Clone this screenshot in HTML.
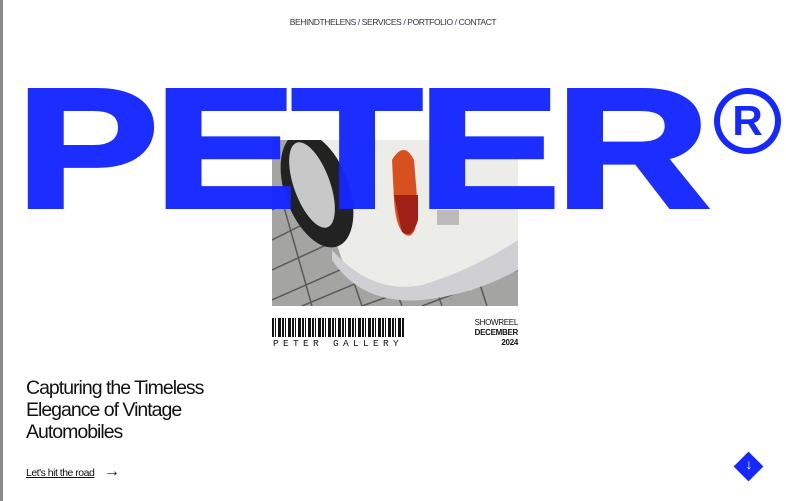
<!DOCTYPE html>
<html><head><meta charset="utf-8"><style>
*{margin:0;padding:0;box-sizing:border-box}
body{width:786px;height:501px;background:#fff;position:relative;overflow:hidden;font-family:"Liberation Sans",sans-serif;color:#111}
.bar{position:absolute;left:0;top:0;width:3px;height:501px;background:#8a8a8a}
.nav{position:absolute;top:17px;left:0;width:786px;text-align:center;font-size:8.5px;letter-spacing:-0.4px;color:#333}
.nav b{color:#1f33ff;font-weight:normal}
.photo{position:absolute;left:272px;top:140px;width:246px;height:166px;overflow:hidden;background:#9a9a98}
.big{position:absolute;left:16px;top:64px;font-size:170px;font-weight:bold;color:#1428ff;line-height:1;transform-origin:0 0;transform:scaleX(1.26);letter-spacing:-4px;-webkit-text-stroke:4px #1428ff;opacity:.97}
.reg{position:absolute;left:714px;top:88px;width:67px;height:66px;border:6px solid #1428ff;border-radius:50%;color:#1428ff;font-weight:bold;font-size:42px;text-align:center;line-height:54px;background:#fff}
.bc{position:absolute;left:272px;top:318px;width:133px;height:19px;background:repeating-linear-gradient(90deg,#111 0 2px,#fff 2px 3px,#111 3px 4px,#fff 4px 6px,#111 6px 9px,#fff 9px 10px)}
.pg{position:absolute;left:273px;top:338px;font-family:"Liberation Mono",monospace;font-size:9.5px;letter-spacing:4.3px;color:#111}
.sr{position:absolute;right:268px;top:318px;text-align:right;font-size:8px;line-height:10px;letter-spacing:-0.3px}
h1{position:absolute;left:26px;top:377px;font-size:19.5px;font-weight:normal;line-height:22px;letter-spacing:-1px;color:#111}
.link{position:absolute;left:26px;top:467px;font-size:10.5px;letter-spacing:-0.5px;text-decoration:underline}
.dia{position:absolute;left:738px;top:456px;width:21px;height:21px;background:#1428ff;transform:rotate(45deg)}
</style></head><body>
<div class="bar"></div>
<div class="nav">BEHINDTHELENS <b>/</b> SERVICES <b>/</b> PORTFOLIO <b>/</b> CONTACT</div>
<div class="photo">
<svg width="246" height="166" viewBox="0 0 246 166">
<rect width="246" height="166" fill="#a4a4a2"/>
<g stroke="#5a5a58" stroke-width="1.5" fill="none">
<path d="M0 70 L60 40 M0 100 L90 55 M0 130 L130 70 M0 160 L170 85 M30 166 L200 95 M90 166 L246 110 M150 166 L246 130"/>
<path d="M10 60 L40 166 M50 50 L90 166 M100 90 L130 166 M150 110 L170 166 M200 120 L215 166"/>
</g>
<path d="M20 0 L246 0 L246 120 L200 150 L150 160 L100 150 L70 120 L60 90 L40 40 Z" fill="#ecece8"/>
<ellipse cx="45" cy="50" rx="32" ry="60" fill="#222" transform="rotate(-20 45 50)"/>
<ellipse cx="40" cy="45" rx="18" ry="45" fill="#c8c8c8" transform="rotate(-20 40 45)"/>
<path d="M120 20 Q132 0 142 20 L146 70 Q144 100 134 95 Q124 90 122 60 Z" fill="#d85020"/>
<path d="M122 55 L146 55 L146 80 Q140 100 130 92 Z" fill="#a02018"/>
<path d="M60 110 Q100 155 150 145 Q200 130 246 100 L246 130 Q200 155 150 160 Q90 165 60 120Z" fill="#d0d0d4"/>
<rect x="165" y="70" width="22" height="15" fill="#bbb"/>
</svg>
</div>
<div class="big">PETER</div>
<div class="reg">R</div>
<div class="bc"></div>
<div class="pg">PETER GALLERY</div>
<div class="sr">SHOWREEL<br><b>DECEMBER<br>2024</b></div>
<h1>Capturing the Timeless<br>Elegance of Vintage<br>Automobiles</h1>
<div class="link">Let's hit the road</div><div style="position:absolute;left:104px;top:463px;font-size:16px">→</div>
<div class="dia"></div>
<div style="position:absolute;left:743px;top:456px;width:12px;text-align:center;color:#fff;font-size:14px">↓</div>
</body></html>
